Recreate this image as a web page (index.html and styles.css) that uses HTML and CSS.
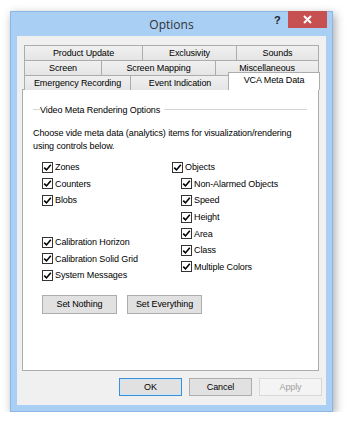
FILE: index.html
```html
<!DOCTYPE html>
<html lang="en">
<head>
    <meta charset="UTF-8">
    <title>Options</title>
    <link rel="stylesheet" href="styles.css">
</head>
<body>

    <div class="window">
        <div class="titlebar">
            <span class="title">Options</span>
            <span class="help">?</span>
            <span class="close">
                <svg width="9" height="9" viewBox="0 0 9 9"><path d="M1 1 L8 8 M8 1 L1 8" stroke="#fff" stroke-width="2"/></svg>
            </span>
        </div>

        <div class="client">
            <!-- tab headers, three rows -->
            <div class="tabrow">
                <div class="tab" style="width:119px">Product Update</div>
                <div class="tab" style="width:95px">Exclusivity</div>
                <div class="tab" style="width:83px">Sounds</div>
            </div>
            <div class="tabrow">
                <div class="tab" style="width:78px">Screen</div>
                <div class="tab" style="width:115px">Screen Mapping</div>
                <div class="tab" style="width:104px">Miscellaneous</div>
            </div>
            <div class="tabrow last">
                <div class="tab" style="width:107px">Emergency Recording</div>
                <div class="tab" style="width:100px">Event Indication</div>
                <div class="tab active" style="width:92px">VCA Meta Data</div>
            </div>

            <div class="panel">
                <div class="group-head">
                    <span class="dash"></span>
                    <span class="group-title">Video Meta Rendering Options</span>
                    <span class="line"></span>
                </div>

                <p class="desc">Choose vide meta data (analytics) items for visualization/rendering<br>using controls below.</p>

                <div class="columns">
                    <div class="col left">
                        <div class="check"><span class="box"><svg width="9" height="9" viewBox="0 0 9 9"><path d="M1.2 4.6 L3.5 6.9 L7.8 1.8" fill="none" stroke="#000" stroke-width="1.6"/></svg></span>Zones</div>
                        <div class="check"><span class="box"><svg width="9" height="9" viewBox="0 0 9 9"><path d="M1.2 4.6 L3.5 6.9 L7.8 1.8" fill="none" stroke="#000" stroke-width="1.6"/></svg></span>Counters</div>
                        <div class="check"><span class="box"><svg width="9" height="9" viewBox="0 0 9 9"><path d="M1.2 4.6 L3.5 6.9 L7.8 1.8" fill="none" stroke="#000" stroke-width="1.6"/></svg></span>Blobs</div>
                        <div class="spacer"></div>
                        <div class="check"><span class="box"><svg width="9" height="9" viewBox="0 0 9 9"><path d="M1.2 4.6 L3.5 6.9 L7.8 1.8" fill="none" stroke="#000" stroke-width="1.6"/></svg></span>Calibration Horizon</div>
                        <div class="check"><span class="box"><svg width="9" height="9" viewBox="0 0 9 9"><path d="M1.2 4.6 L3.5 6.9 L7.8 1.8" fill="none" stroke="#000" stroke-width="1.6"/></svg></span>Calibration Solid Grid</div>
                        <div class="check"><span class="box"><svg width="9" height="9" viewBox="0 0 9 9"><path d="M1.2 4.6 L3.5 6.9 L7.8 1.8" fill="none" stroke="#000" stroke-width="1.6"/></svg></span>System Messages</div>
                    </div>
                    <div class="col right">
                        <div class="check"><span class="box"><svg width="9" height="9" viewBox="0 0 9 9"><path d="M1.2 4.6 L3.5 6.9 L7.8 1.8" fill="none" stroke="#000" stroke-width="1.6"/></svg></span>Objects</div>
                        <div class="sub">
                            <div class="check"><span class="box"><svg width="9" height="9" viewBox="0 0 9 9"><path d="M1.2 4.6 L3.5 6.9 L7.8 1.8" fill="none" stroke="#000" stroke-width="1.6"/></svg></span>Non-Alarmed Objects</div>
                            <div class="check"><span class="box"><svg width="9" height="9" viewBox="0 0 9 9"><path d="M1.2 4.6 L3.5 6.9 L7.8 1.8" fill="none" stroke="#000" stroke-width="1.6"/></svg></span>Speed</div>
                            <div class="check"><span class="box"><svg width="9" height="9" viewBox="0 0 9 9"><path d="M1.2 4.6 L3.5 6.9 L7.8 1.8" fill="none" stroke="#000" stroke-width="1.6"/></svg></span>Height</div>
                            <div class="check"><span class="box"><svg width="9" height="9" viewBox="0 0 9 9"><path d="M1.2 4.6 L3.5 6.9 L7.8 1.8" fill="none" stroke="#000" stroke-width="1.6"/></svg></span>Area</div>
                            <div class="check"><span class="box"><svg width="9" height="9" viewBox="0 0 9 9"><path d="M1.2 4.6 L3.5 6.9 L7.8 1.8" fill="none" stroke="#000" stroke-width="1.6"/></svg></span>Class</div>
                            <div class="check"><span class="box"><svg width="9" height="9" viewBox="0 0 9 9"><path d="M1.2 4.6 L3.5 6.9 L7.8 1.8" fill="none" stroke="#000" stroke-width="1.6"/></svg></span>Multiple Colors</div>
                        </div>
                    </div>
                </div>

                <div class="set-buttons">
                    <button class="btn">Set Nothing</button>
                    <button class="btn">Set Everything</button>
                </div>
            </div>

            <div class="dialog-buttons">
                <button class="btn dlg default">OK</button>
                <button class="btn dlg">Cancel</button>
                <button class="btn dlg disabled">Apply</button>
            </div>
        </div>
    </div>

</body>
</html>
```

FILE: styles.css
```css
body {
    margin: 0;
    padding: 0;
    background-color: #fff;
    font-family: "Liberation Sans", Arial, sans-serif;
    font-size: 9px;
    letter-spacing: -0.1px;
    color: #000;
}

.window {
    margin: 11px 0 0 10px;
    width: 321px;
    height: 399px;
    background-color: #a9cff5;
    border: 1px solid #8db7e2;
    box-shadow: 2px 3px 9px rgba(0, 0, 0, 0.35);
    display: flex;
    flex-direction: column;
}

.titlebar {
    height: 24px;
    position: relative;
}

.title {
    position: absolute;
    left: 0;
    right: 0;
    top: 4px;
    text-align: center;
    font-family: "Open Sans", "Noto Sans", sans-serif;
    font-size: 12px;
    letter-spacing: 0;
    color: #333;
}

.help {
    position: absolute;
    left: 263px;
    top: 2px;
    font-weight: bold;
    font-size: 11px;
    color: #222;
}

.close {
    position: absolute;
    left: 277px;
    top: -1px;
    width: 39px;
    height: 17px;
    background-color: #c75050;
    display: flex;
    align-items: center;
    justify-content: center;
}

.client {
    margin: 0 6px 6px 6px;
    flex: 1;
    background-color: #f0f0f0;
    padding: 9px 6px 0 5px;
    display: flex;
    flex-direction: column;
}

.tabrow {
    display: flex;
    margin-left: 2px;
    height: 15px;
}

.tabrow.last {
    align-items: flex-end;
    position: relative;
    z-index: 1;
    margin-bottom: -1px;
}

.tab {
    box-sizing: border-box;
    height: 15px;
    border: 1px solid #acacac;
    border-bottom: none;
    background: linear-gradient(#f0f0f0, #e5e5e5);
    text-align: center;
    line-height: 14px;
}

.tab + .tab {
    margin-left: -1px;
}

.tab.active {
    height: 18px;
    margin-top: -2px;
    margin-left: -2px;
    margin-right: -2px;
    background: #fff;
    line-height: 15px;
}

.panel {
    height: 282px;
    width: 297px;
    box-sizing: border-box;
    background-color: #fff;
    border: 1px solid #acacac;
    padding: 14px 10px 0 10px;
}

.group-head {
    display: flex;
    align-items: center;
    height: 11px;
}

.group-head .dash {
    width: 7px;
    border-top: 1px solid #d5d5d5;
}

.group-head .line {
    flex: 1;
    margin-left: 4px;
    margin-right: 1px;
    border-top: 1px solid #d5d5d5;
}

.desc {
    margin: 12px 0 0 0;
    line-height: 13px;
}

.columns {
    display: flex;
    margin-top: 6px;
}

.col.left {
    width: 130px;
    padding-left: 9px;
}

.check {
    display: flex;
    align-items: center;
    height: 16.6px;
}

.box {
    box-sizing: border-box;
    width: 11px;
    height: 11px;
    border: 1px solid #333;
    background: #fff;
    margin-right: 2px;
    display: flex;
    align-items: center;
    justify-content: center;
}

.spacer {
    height: 25px;
}

.sub {
    padding-left: 9px;
}

.set-buttons {
    display: flex;
    gap: 10px;
    margin-top: 11px;
    padding-left: 9px;
}

.btn {
    box-sizing: border-box;
    width: 75px;
    height: 19px;
    padding: 0;
    font-family: "Liberation Sans", Arial, sans-serif;
    font-size: 9px;
    letter-spacing: -0.1px;
    color: #000;
    background-color: #e1e1e1;
    border: 1px solid #adadad;
}

.dialog-buttons {
    display: flex;
    justify-content: flex-end;
    gap: 7px;
    margin-top: 7px;
    margin-right: -2px;
}

.btn.dlg {
    width: 63px;
    height: 18px;
}

.btn.default {
    border-color: #3c8fd4;
    box-shadow: inset 0 0 0 1px #cde6fa;
}

.btn.disabled {
    background-color: #f4f4f4;
    border-color: #d9d9d9;
    color: #a0a0a0;
}
```
